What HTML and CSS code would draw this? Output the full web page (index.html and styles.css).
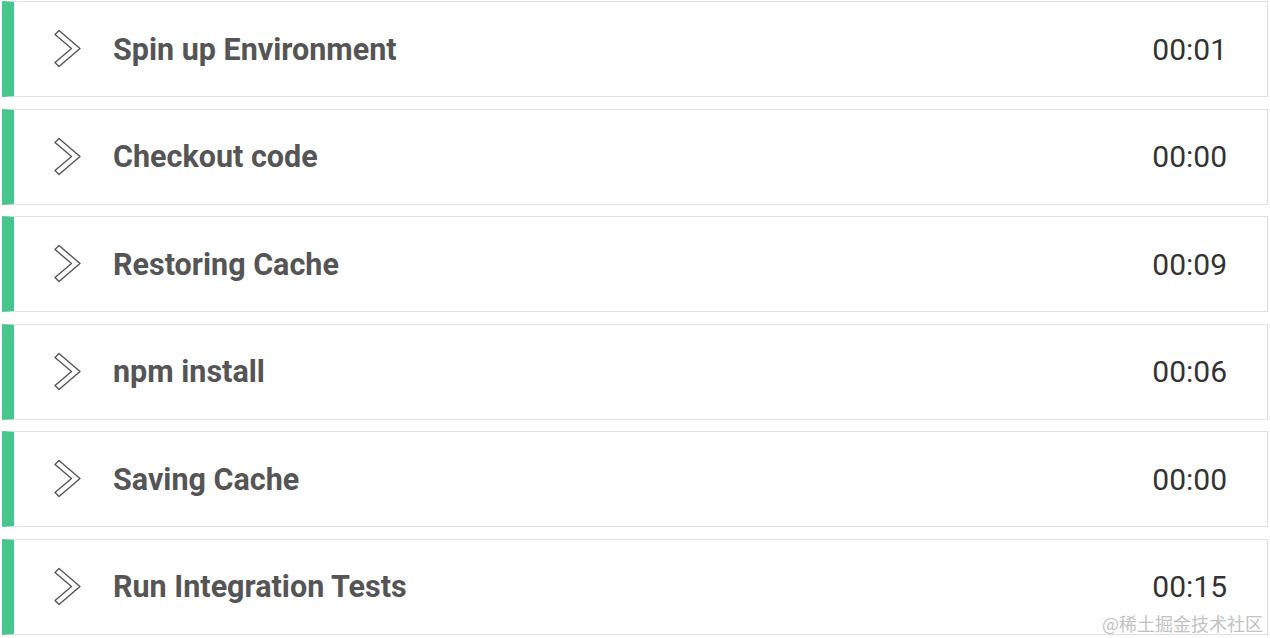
FILE: index.html
```html
<!DOCTYPE html>
<html>
<head>
<meta charset="utf-8">
<link rel="stylesheet" href="styles.css">
</head>
<body>
<div class="steps">
  <div class="step">
    <svg class="chev" viewBox="0 0 30 40" width="30" height="40"><path d="M2 5.5 L6 1.5 L27 19.5 L6 37.5 L2 33.5 L18.5 19.5 Z"/></svg>
    <span class="name">Spin up Environment</span>
    <span class="time">00:01</span>
  </div>
  <div class="step">
    <svg class="chev" viewBox="0 0 30 40" width="30" height="40"><path d="M2 5.5 L6 1.5 L27 19.5 L6 37.5 L2 33.5 L18.5 19.5 Z"/></svg>
    <span class="name">Checkout code</span>
    <span class="time">00:00</span>
  </div>
  <div class="step">
    <svg class="chev" viewBox="0 0 30 40" width="30" height="40"><path d="M2 5.5 L6 1.5 L27 19.5 L6 37.5 L2 33.5 L18.5 19.5 Z"/></svg>
    <span class="name">Restoring Cache</span>
    <span class="time">00:09</span>
  </div>
  <div class="step">
    <svg class="chev" viewBox="0 0 30 40" width="30" height="40"><path d="M2 5.5 L6 1.5 L27 19.5 L6 37.5 L2 33.5 L18.5 19.5 Z"/></svg>
    <span class="name">npm install</span>
    <span class="time">00:06</span>
  </div>
  <div class="step">
    <svg class="chev" viewBox="0 0 30 40" width="30" height="40"><path d="M2 5.5 L6 1.5 L27 19.5 L6 37.5 L2 33.5 L18.5 19.5 Z"/></svg>
    <span class="name">Saving Cache</span>
    <span class="time">00:00</span>
  </div>
  <div class="step">
    <svg class="chev" viewBox="0 0 30 40" width="30" height="40"><path d="M2 5.5 L6 1.5 L27 19.5 L6 37.5 L2 33.5 L18.5 19.5 Z"/></svg>
    <span class="name">Run Integration Tests</span>
    <span class="time">00:15</span>
  </div>
</div>
<div class="watermark">@稀土掘金技术社区</div>
</body>
</html>
```
FILE: styles.css
```css
html, body {
  margin: 0;
  padding: 0;
  background: #fff;
}
body {
  padding: 1px 2px 0 2px;
  font-family: Roboto, "Liberation Sans", sans-serif;
  position: relative;
  height: 637px;
  overflow: hidden;
}
.steps {
  display: flex;
  flex-direction: column;
  gap: 11.6px;
}
.step {
  height: 94px;
  border: 1px solid #e0e0e0;
  border-left: 12px solid #46c68c;
  display: flex;
  align-items: center;
  padding: 0 40px 0 39px;
  background: #fff;
}
.chev {
  flex: none;
}
.chev path {
  fill: none;
  stroke: #555;
  stroke-width: 1.4;
  stroke-linejoin: round;
}
.name {
  margin-left: 30px;
  font-size: 30.5px;
  font-weight: 700;
  color: #555;
  flex: 1;
}
.time {
  font-size: 30px;
  font-weight: 400;
  color: #333;
}
.watermark {
  position: absolute;
  right: 7px;
  bottom: 6px;
  font-family: "Noto Sans CJK SC", sans-serif;
  font-size: 18px;
  color: #c2c2c2;
  line-height: 1;
}
```
